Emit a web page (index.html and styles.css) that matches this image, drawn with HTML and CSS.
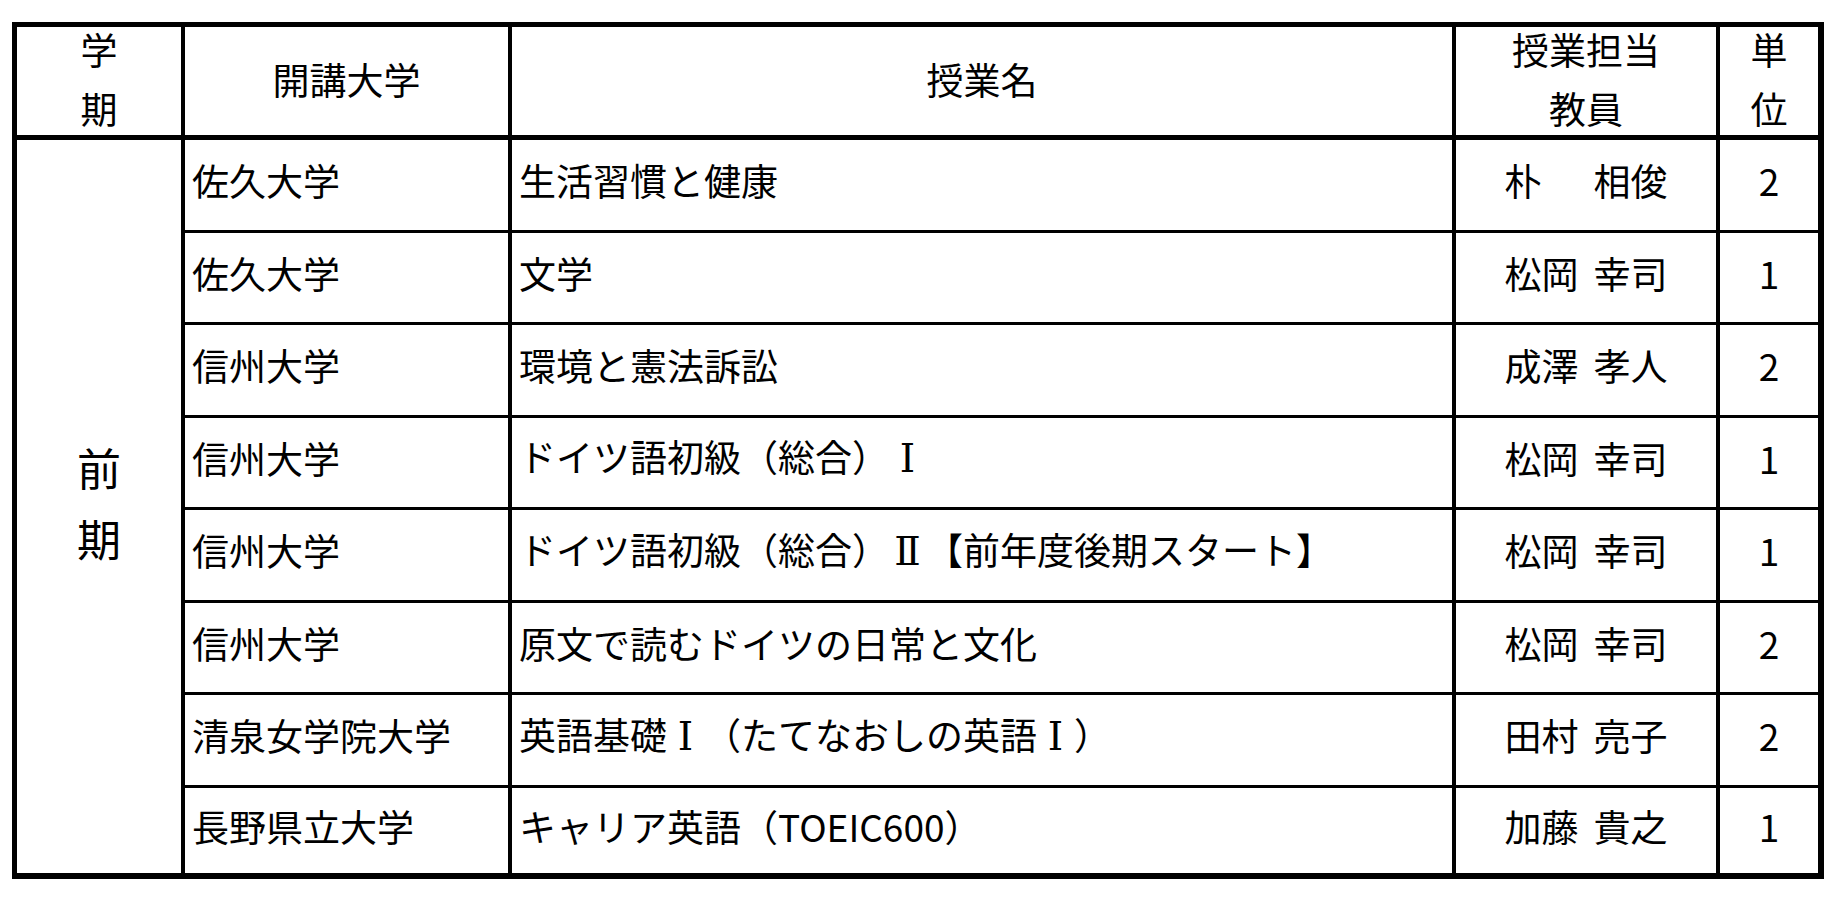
FILE: index.html
```html
<!DOCTYPE html>
<html lang="ja">
<head>
<meta charset="utf-8">
<title>授業一覧</title>
<link rel="stylesheet" href="styles.css">
</head>
<body>
<table class="courses">
  <thead>
    <tr>
      <th class="c1"><div class="hd">学<br>期</div></th>
      <th class="c2"><div class="hd">開講大学</div></th>
      <th class="c3"><div class="hd">授業名</div></th>
      <th class="c4"><div class="hd">授業担当<br>教員</div></th>
      <th class="c5 last"><div class="hd">単<br>位</div></th>
    </tr>
  </thead>
  <tbody>
    <tr class="tall">
      <td class="term" rowspan="8"><div class="term-text">前<br>期</div></td>
      <td class="uni">佐久大学</td>
      <td class="name">生活習慣と健康</td>
      <td class="teacher">朴　 相俊</td>
      <td class="credit last">2</td>
    </tr>
    <tr>
      <td class="uni">佐久大学</td>
      <td class="name">文学</td>
      <td class="teacher">松岡 幸司</td>
      <td class="credit last">1</td>
    </tr>
    <tr class="tall">
      <td class="uni">信州大学</td>
      <td class="name">環境と憲法訴訟</td>
      <td class="teacher">成澤 孝人</td>
      <td class="credit last">2</td>
    </tr>
    <tr>
      <td class="uni">信州大学</td>
      <td class="name">ドイツ語初級（総合）<span class="rn">Ⅰ</span></td>
      <td class="teacher">松岡 幸司</td>
      <td class="credit last">1</td>
    </tr>
    <tr class="tall">
      <td class="uni">信州大学</td>
      <td class="name">ドイツ語初級（総合）<span class="rn">Ⅱ</span>【前年度後期スタート】</td>
      <td class="teacher">松岡 幸司</td>
      <td class="credit last">1</td>
    </tr>
    <tr>
      <td class="uni">信州大学</td>
      <td class="name">原文で読むドイツの日常と文化</td>
      <td class="teacher">松岡 幸司</td>
      <td class="credit last">2</td>
    </tr>
    <tr class="tall">
      <td class="uni">清泉女学院大学</td>
      <td class="name">英語基礎<span class="rn">Ⅰ</span>（たてなおしの英語<span class="rn">Ⅰ</span>）</td>
      <td class="teacher">田村 亮子</td>
      <td class="credit last">2</td>
    </tr>
    <tr class="final">
      <td class="uni">長野県立大学</td>
      <td class="name">キャリア英語（TOEIC600）</td>
      <td class="teacher">加藤 貴之</td>
      <td class="credit last">1</td>
    </tr>
  </tbody>
</table>
</body>
</html>
```

FILE: styles.css
```css
html, body {
  margin: 0;
  padding: 0;
  background: #ffffff;
}

body {
  font-family: "Noto Sans CJK JP", "Noto Sans", sans-serif;
  color: #000000;
}

.courses {
  margin: 22px 0 0 12px;
  width: 1812px;
  table-layout: fixed;
  border-collapse: separate;
  border-spacing: 0;
  border-top: 5px solid #000;
  border-left: 5px solid #000;
  font-size: 37px;
}

.courses th,
.courses td {
  box-sizing: border-box;
  padding: 0;
  border-right: 4px solid #000;
  border-bottom: 3px solid #000;
  vertical-align: middle;
  font-weight: normal;
}

.courses .last {
  border-right-width: 6px;
}

.courses th {
  height: 113px;
  border-bottom-width: 5px;
  text-align: center;
}

.c1 { width: 168px; }
.c2 { width: 327px; }
.c3 { width: 944px; }
.c4 { width: 264px; }
.c5 { width: 104px; }

.hd {
  height: 108px;
  display: flex;
  flex-direction: column;
  justify-content: center;
  line-height: 59px;
  margin-top: -4px;
}

.courses td {
  height: 92px;
  line-height: 50px;
  padding-bottom: 10px;
}

.courses .tall td {
  height: 93px;
}

.courses .final td {
  height: 91px;
  border-bottom-width: 6px;
  padding-bottom: 9px;
}

.courses td.term {
  height: auto;
  border-bottom-width: 6px;
  padding-bottom: 0;
}

.term {
  text-align: center;
}

.term-text {
  font-size: 44px;
  line-height: 71px;
  margin-top: -8px;
}

.uni,
.name {
  text-align: left;
  padding-left: 7px !important;
}

.rn {
  display: inline-block;
  width: 0.95em;
  text-align: center;
  font-family: "DejaVu Serif", "Noto Sans CJK JP", serif;
  font-size: 39px;
}

.teacher {
  text-align: center;
  word-spacing: 0.18em;
}

.credit {
  text-align: center;
}
```
